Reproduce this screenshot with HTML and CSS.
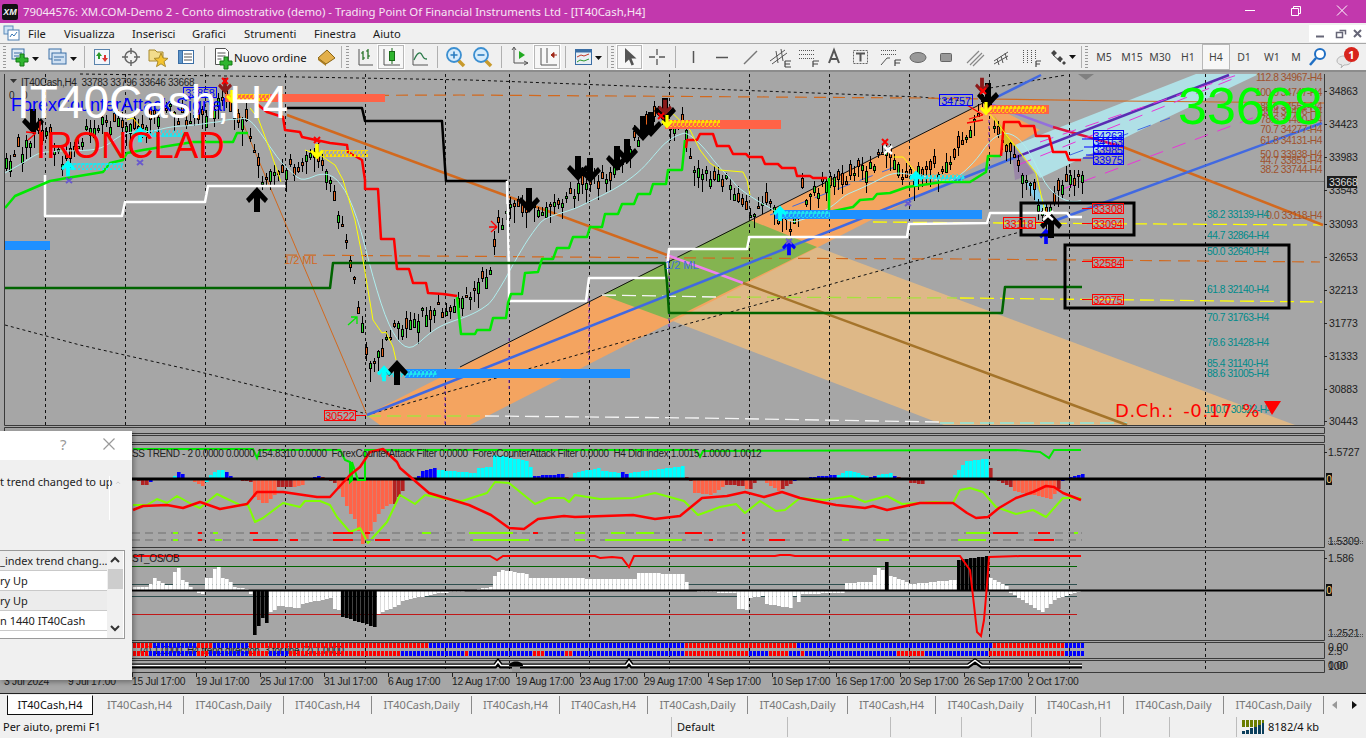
FILE: index.html
```html
<!DOCTYPE html>
<html lang="it">
<head>
<meta charset="utf-8">
<title>XM.COM MT4</title>
<link rel="stylesheet" href="styles.css">
</head>
<body>
<div class="app">
  <header class="titlebar">
    <span class="xm">XM</span>
    <span class="title-text">79044576: XM.COM-Demo 2 - Conto dimostrativo (demo) - Trading Point Of Financial Instruments Ltd - [IT40Cash,H4]</span>
    <div class="winbtns">
      <svg width="46" height="23" viewBox="0 0 46 23"><path d="M18 10.5h10" class="w1"/></svg>
      <svg width="46" height="23" viewBox="0 0 46 23"><path d="M18.500 8.500h7v7h-7zM20.500 8.500v-2h7v7h-2" class="w1"/></svg>
      <svg width="46" height="23" viewBox="0 0 46 23"><path d="M18 5.500l10 10M28 5.500l-10 10" class="w1"/></svg>
    </div>
  </header>

  <nav class="menubar">
    <svg class="mdi" width="20" height="18" viewBox="0 0 20 18"><rect x="2" y="2" width="9" height="8" fill="#cfe3f5" stroke="#5b89b8"/><rect x="6" y="6" width="11" height="10" fill="#fff" stroke="#4a7cb0"/><path d="M8 13l2-3 2 2 3-4" fill="none" stroke="#3a78b5"/></svg>
    <span class="mi mi-file">File</span>
    <span class="mi mi-vis">Visualizza</span>
    <span class="mi mi-ins">Inserisci</span>
    <span class="mi mi-gra">Grafici</span>
    <span class="mi mi-str">Strumenti</span>
    <span class="mi mi-fin">Finestra</span>
    <span class="mi">Aiuto</span>
    <div class="mdibtns">
      <svg width="23" height="17" viewBox="0 0 23 17"><rect width="23" height="17" fill="#fff"/><path d="M7 11.500h8" stroke="#667" stroke-width="2"/></svg>
      <svg width="18" height="17" viewBox="0 0 18 17"><rect width="18" height="17" fill="#fff"/><path d="M4.500 7.500h6v5h-6zM7.500 5.500h6v4" fill="none" stroke="#667" stroke-width="1.500"/></svg>
      <svg width="16" height="17" viewBox="0 0 16 17"><rect width="16" height="17" fill="#fff"/><path d="M4 5l7 7M11 5l-7 7" stroke="#667" stroke-width="2"/></svg>
    </div>
  </nav>

  <div class="toolbar">
    <i class="grip"></i>
    <svg width="34" height="26" viewBox="0 0 34 26"><rect x="4" y="5" width="12" height="10" fill="#dfeaf5" stroke="#3a6ea5"/><path d="M6 9h8M6 12h5" stroke="#3a6ea5"/><path d="M12 10h4v4h4v4h-4v4h-4v-4H8v-4h4z" fill="#2fb52f" stroke="#147a14"/><path d="M24 13h7l-3.500 4z" fill="#111"/></svg>
    <svg width="38" height="26" viewBox="0 0 38 26"><rect x="7" y="5" width="12" height="10" fill="#dfeaf5" stroke="#3a6ea5"/><rect x="10" y="9" width="14" height="11" fill="#cfe0f2" stroke="#3a6ea5"/><path d="M12 13h10M12 16h7" stroke="#3a6ea5"/><path d="M28 13h7l-3.500 4z" fill="#111"/></svg>
    <i class="sep"></i>
    <svg width="28" height="26" viewBox="0 0 28 26"><rect x="6.500" y="5.500" width="15" height="15" fill="#f2f6fb" stroke="#5a84ad"/><path d="M11 8l-3 4h2v3h2v-3h2z" fill="#2a9a2a"/><path d="M17 18l3-4h-2v-3h-2v3h-2z" fill="#d33"/></svg>
    <svg width="28" height="26" viewBox="0 0 28 26"><circle cx="15" cy="13" r="6" fill="none" stroke="#666" stroke-width="1.500"/><path d="M15 4v6M15 16v6M6 13h6M18 13h6" stroke="#666" stroke-width="1.500"/></svg>
    <svg width="28" height="26" viewBox="0 0 28 26"><path d="M5 6h6l2 2h6v9H5z" fill="#f3dc8c" stroke="#a98a2c"/><path d="M17 9l2 5 5 .4-4 3.200 1.500 5-4.500-2.800-4.500 2.800 1.500-5-4-3.200 5-.4z" fill="#f4c430" stroke="#a98a2c"/></svg>
    <svg width="28" height="26" viewBox="0 0 28 26"><rect x="6.500" y="6.500" width="15" height="13" fill="#fff" stroke="#3a6ea5"/><rect x="6.500" y="6.500" width="4" height="13" fill="#5b93c9" stroke="#3a6ea5"/><path d="M12 10h8M12 13h8M12 16h8" stroke="#555"/></svg>
    <i class="sep"></i>
    <svg width="26" height="26" viewBox="0 0 26 26"><path d="M7.500 4.500h10l3 3v13h-13z" fill="#fff" stroke="#555"/><path d="M9.500 9h8M9.500 12h8M9.500 15h4" stroke="#555"/><path d="M16 13h4v4h4v4h-4v4h-4v-4h-4v-4h4z" fill="#2fb52f" stroke="#147a14"/></svg>
    <span class="tb-text">Nuovo ordine</span>
    <svg width="26" height="26" viewBox="0 0 26 26"><path d="M5 14l9-8 8 8-9 6z" fill="#e3b04b" stroke="#8a6414"/><path d="M5 14l8 6v2l-8-6z" fill="#a87a1e"/></svg>
    <i class="sep tight"></i>
    <i class="grip"></i>
    <svg width="26" height="26" viewBox="0 0 26 26"><path d="M8 5v16h14" fill="none" stroke="#555"/><path d="M12 7v9M12 9h-2M12 14h2M17 5v10M17 7h-2M17 12h2" stroke="#186a18" stroke-width="1.200"/></svg>
    <svg class="pressed" width="28" height="26" viewBox="0 0 28 26"><path d="M7 5v16h16" fill="none" stroke="#555"/><path d="M15 4v16" stroke="#186a18"/><rect x="12.500" y="7.500" width="5" height="9" fill="#2fb52f" stroke="#186a18"/></svg>
    <svg width="28" height="26" viewBox="0 0 28 26"><path d="M8 5v16h15" fill="none" stroke="#555"/><path d="M9 16c3-7 6-9 8-5s3 4 5 4" fill="none" stroke="#2a7a4a" stroke-width="1.300"/></svg>
    <i class="sep"></i>
    <svg width="30" height="26" viewBox="0 0 30 26"><path d="M17 16l6 6" stroke="#c89a2c" stroke-width="3.500"/><circle cx="13" cy="11" r="7" fill="#d7ecfb" stroke="#3b8fd1" stroke-width="1.800"/><path d="M9.500 11h7M13 7.500v7" stroke="#2a7cc0" stroke-width="1.600"/></svg>
    <svg width="26" height="26" viewBox="0 0 26 26"><path d="M14 16l6 6" stroke="#c89a2c" stroke-width="3.500"/><circle cx="10" cy="11" r="7" fill="#d7ecfb" stroke="#3b8fd1" stroke-width="1.800"/><path d="M6.500 11h7" stroke="#2a7cc0" stroke-width="1.600"/></svg>
    <i class="sep"></i>
    <svg width="28" height="26" viewBox="0 0 28 26"><path d="M9 4v15h14M19 17l4 2-4 2M7 6l2-3 2 3" fill="none" stroke="#555"/><path d="M14 7l6 4-6 4z" fill="#22aa22"/></svg>
    <svg class="pressed" width="28" height="26" viewBox="0 0 28 26"><path d="M8 4v17h16M14 4v15" fill="none" stroke="#555"/><path d="M24 11h-6M18 11l3-2.500v5z" fill="#a02818" stroke="#a02818"/></svg>
    <i class="sep"></i>
    <svg width="36" height="26" viewBox="0 0 36 26"><rect x="6.500" y="5.500" width="16" height="15" fill="#e8eef5" stroke="#3a6ea5"/><rect x="6.500" y="5.500" width="16" height="3" fill="#3a6ea5"/><path d="M8 13l4-2 3 1 5-2" fill="none" stroke="#c0392b"/><path d="M8 18l3-2 4 1 5-2" fill="none" stroke="#2a9a2a"/><path d="M26 12h7l-3.500 4z" fill="#111"/></svg>
    <i class="sep tight"></i>
    <i class="grip short"></i>
    <svg class="pressed" width="27" height="26" viewBox="0 0 27 26"><path d="M9 4v15l4-3.500 2.500 6 2.500-1-2.500-6h5z" fill="#555"/></svg>
    <svg width="28" height="26" viewBox="0 0 28 26"><path d="M14 5v6M14 15v6M6 13h6M16 13h6" stroke="#555" stroke-width="1.300"/></svg>
    <i class="sep"></i>
    <svg width="28" height="26" viewBox="0 0 28 26"><path d="M14.500 7v12" stroke="#555" stroke-width="1.500"/></svg>
    <svg width="29" height="26" viewBox="0 0 29 26"><path d="M9 13.500h12" stroke="#555" stroke-width="1.500"/></svg>
    <svg width="28" height="26" viewBox="0 0 28 26"><path d="M8 20L21 7" stroke="#777" stroke-width="1.500"/></svg>
    <svg width="29" height="26" viewBox="0 0 29 26"><path d="M6 17L21 6M8 20l15-11M12 7l2 12M17 5l2 12" stroke="#555"/><path d="M21 17h6M21 20h5M21 23h6M21 17v6" stroke="#444" stroke-width="1.200"/></svg>
    <svg width="28" height="26" viewBox="0 0 28 26"><path d="M6 6.500h15M6 10.500h15M6 14.500h15" stroke="#555" stroke-dasharray="1 1"/><path d="M20 17h6M20 17v6M20 20h5" stroke="#444" stroke-width="1.200"/></svg>
    <svg width="26" height="26" viewBox="0 0 26 26"><path d="M8 19l5-13 5 13M10 15h6" fill="none" stroke="#555" stroke-width="2"/></svg>
    <svg width="28" height="26" viewBox="0 0 28 26"><rect x="6.500" y="6.500" width="14" height="13" fill="none" stroke="#666" stroke-dasharray="2 1"/><path d="M9 9.500h9M13.500 9.500v8" stroke="#555" stroke-width="2"/></svg>
    <svg width="29" height="26" viewBox="0 0 29 26"><path d="M6 6.500h15M6 10.500h15" stroke="#555" stroke-dasharray="1 1"/><path d="M6 21l6-7h3" fill="none" stroke="#555"/><path d="M20 16h6M20 16v6M20 19h5" stroke="#444" stroke-width="1.200"/></svg>
    <svg width="28" height="26" viewBox="0 0 28 26"><ellipse cx="14" cy="13.500" rx="8" ry="5" fill="#999" stroke="#666"/></svg>
    <svg width="28" height="26" viewBox="0 0 28 26"><rect x="8.500" y="9.500" width="11" height="8" rx="1" fill="#999" stroke="#666"/></svg>
    <svg width="28" height="26" viewBox="0 0 28 26"><path d="M7 19L19 7M10 21L22 9M13 22L24 11" stroke="#888" stroke-width="1.200"/></svg>
    <svg width="28" height="26" viewBox="0 0 28 26"><path d="M6 20l14-8M6 17l14-9M9 15l2 6M13 12l2 7M17 9l2 7" stroke="#555"/></svg>
    <svg width="28" height="26" viewBox="0 0 28 26"><path d="M7.500 6v14M11.500 6v14M15.500 6v14M19.500 6v10" stroke="#555" stroke-dasharray="1 1"/><path d="M20 17h5M20 17v6M20 20h4" stroke="#444" stroke-width="1.200"/></svg>
    <svg width="35" height="26" viewBox="0 0 35 26"><path d="M7 9l3-3 3 3-3 3zM13 15l3-3 3 3-3 3zM18 19l2-2 2 2-2 2z" fill="#444"/><path d="M9 11l8 7" stroke="#444"/><path d="M25 11h7l-3.500 4z" fill="#111"/></svg>
    <i class="sep tight"></i>
    <i class="grip short"></i>
    <span class="tf">M5</span><span class="tf">M15</span><span class="tf">M30</span><span class="tf">H1</span><span class="tf tf-on">H4</span><span class="tf">D1</span><span class="tf">W1</span><span class="tf tf-m">M</span>
    <svg width="24" height="26" viewBox="0 0 24 26"><circle cx="14" cy="10" r="5" fill="#fff" stroke="#1f6fc4" stroke-width="2"/><path d="M10 14l-6 7" stroke="#1f6fc4" stroke-width="2.500"/></svg>
    <div class="bubble">
      <svg width="36" height="26" viewBox="0 0 36 26"><path d="M7 17c0-3 3-5 7-5s7 2 7 5-3 4-7 4l-3 3 1-3c-3-.5-5-2-5-4z" fill="#e8e8e8" stroke="#b5b5b5"/></svg>
      <span class="badge">1</span>
    </div>
  </div>

  <main class="chartarea">
    <svg id="chart" class="chart" viewBox="0 70 1366 623" width="1366" height="623" xmlns="http://www.w3.org/2000/svg">
      <defs>
        <symbol id="dn" viewBox="-11 -14 22 26" overflow="visible"><path d="M-3-14H3V0L8-5l3 4L0 11-11-1l3-4L-3 0z"/></symbol>
        <pattern id="hy" width="4" height="7" patternUnits="userSpaceOnUse"><path d="M1 7L3 0H4.500L3 3.500H4M0 3h3" stroke="#ffe000" stroke-width="1.200" fill="none"/></pattern>
        <pattern id="hc" width="4" height="7" patternUnits="userSpaceOnUse"><path d="M1 7L3 0H4.500L3 3.500H4M0 3h3" stroke="#1fe6f0" stroke-width="1.200" fill="none"/></pattern>
      </defs>
      <rect class="bg" x="1" y="70" width="1365" height="623"/>
      <path class="topedge" d="M0 71H1366"/>

      <!-- bands -->
      <polygon class="b-tan" points="817,247 1295,425 944,425 670,320"/>
      <polygon class="b-or" points="366,415 985,102 1040,130 1008,150 470,425 380,425"/>
      <polygon class="b-gr" points="602,295 750,220 817,247 670,320"/>
      <polygon class="b-lb" points="1015,145 1196,74 1259,74 1040,178"/>
      <polygon class="b-sky" points="1026,182 1034,183 1052,215 1042,215"/>
      <polygon class="b-gold" points="994,115 1016,147 1005,147"/>
      <polygon class="b-pur" points="1011,143 1034,173 1015,180"/>

      <!-- grid -->
      <g id="grid" class="grid"></g>
      <path class="vp" d="M445 385V425M509 338V390M589 298V360M669 258V330M989 120V150"/>
      <path class="price-line" d="M5 181.500H1324"/>

      <!-- long lines -->
      <polyline class="bd" points="5,325 80,345 200,372 363,413"/>
      <polyline class="bd" points="80,74 300,77 470,80 920,97 965,101"/>
      <polyline class="bd" points="990,88 1066,75"/>
      <polyline class="bd" points="367,415 640,337 1020,232"/>
      <polyline class="bedge" points="460,367 985,102"/>
      <polyline class="od" points="225,96 460,95 920,98 988,99"/>
      <polyline class="ot" points="988,99 1120,101 1324,103"/>
      <polyline class="ot2" points="233,100 367,415"/>
      <polyline class="od" points="285,255 700,258 960,259 1320,262"/>
      <polyline class="yd" points="873,222 1000,223 1322,225"/>
      <polyline class="wd" points="602,295 717,297"/>
      <polyline class="lgd" points="727,297 957,298"/>
      <polyline class="yd" points="960,298 1322,302"/>
      <polyline class="lgd" points="367,416 480,416"/>
      <polyline class="wd" points="485,416 700,418 940,422"/>
      <polyline class="cd" points="940,423 1127,423"/>

      <polyline class="l-o" points="287,115 667,255"/>
      <polyline class="l-p" points="667,255 743,283"/>
      <polyline class="l-b" points="743,283 1127,425"/>
      <polyline class="l-v" points="990,104 1053,127"/>
      <polyline class="l-c" points="1053,127 1123,147"/>
      <polyline class="l-o" points="1123,147 1323,225"/>
      <polyline class="l-bl" points="367,415 1016,157"/>
      <polyline class="l-pu" points="1016,157 1229,75"/>
      <polyline class="l-bl" points="1043,225 1322,123"/>
      <polyline class="l-bl" points="985,103 1041,75"/>
      <polyline class="l-pk" points="1018,165 1240,76"/>
      <polyline class="l-pk" points="1040,142 1240,74"/>
      <polyline class="l-pk" points="1060,190 1290,104"/>
      <polyline class="l-bd" points="1070,155 1170,118"/>
      <polyline class="l-bd" points="770,215 900,165"/>

      <g id="candles"></g>
      <polyline id="cyline" class="l-cy"/>

      <!-- steps -->
      <polyline class="s-bk" points="287,108 362,108 365,121 442,121 445,167 446,181 507,181"/>
      <polyline class="s-wh" points="45,175 45,216 122,216 125,202 205,202 208,186 285,186"/>
      <polyline class="s-wh" points="507,181 509,272 509,301 586,301 589,278 666,278 669,249 747,249 749,239 749,237 907,237 909,224 987,223 990,213 1043,213 1067,213 1070,217 1082,217"/>
      <polyline class="s-dg" points="5,288 330,288 333,263 665,263 667,283 669,313 1002,313 1005,287 1082,287"/>
      <polyline class="s-re" points="252,100 267,112 283,117 285,130 300,132 302,137 330,143 347,145 348,152 362,160 365,180 365,189 378,189 381,239 394,239 397,269 409,269 413,283 426,283 428,293 443,294 457,296"/>
      <polyline class="s-li" points="5,208 15,196 50,181 67,178 103,172 110,163 123,160 127,153 143,150 193,142 233,142 237,133 248,133"/>
      <polyline class="s-li" points="457,297 461,334 475,334 477,330 490,330 493,318 506,318 508,303 511,294 522,294 525,273 538,272 542,259 553,259 557,248 569,248 573,237 587,237 590,227 602,227 605,214 618,214 622,204 634,204 638,194 650,194 653,184 666,184 668,170 682,170 685,140"/>
      <polyline class="s-re" points="686,148 687,140 697,140 700,134 713,134 717,146 729,146 733,154 746,154 749,157 762,157 765,164 778,164 782,168 795,168 797,176 810,176 813,178 827,178"/>
      <polyline class="s-li" points="829,178 829,212 853,207 860,200 873,199 877,194 890,193 907,187 922,185 942,182 970,182 986,172 988,156 1001,156"/>
      <polyline class="s-re" points="1001,156 1004,122 1019,122 1021,126 1034,126 1036,136 1049,136 1053,152 1066,152 1069,160 1081,160"/>
      <polyline class="l-ye" points="127,120 133,118 140,126"/>
      <polyline class="l-ye" points="250,108 258,118 270,150 281,182"/>
      <polyline class="l-ye" points="305,150 320,155 335,165 343,180 355,220 363,260 373,320 382,333 386,332 393,347 396,360"/>
      <polyline class="l-ye" points="664,105 690,130 700,150 710,163 720,170 743,172 747,180 750,195"/>
      <polyline class="l-ye" points="893,157 903,157 920,177"/>
      <polyline class="l-ye" points="989,113 1016,147 1036,173 1045,212"/>

      <!-- bars -->
      <rect class="bar-b" x="5" y="241" width="45" height="9"/>
      <rect class="bar-b" x="405" y="369" width="225" height="9"/>
      <rect class="bar-b" x="775" y="210" width="207" height="9"/>
      <rect class="bar-r" x="225" y="94" width="160" height="8"/>
      <rect class="bar-r" x="665" y="120" width="116" height="9"/>
      <rect class="bar-r" x="985" y="105" width="64" height="9"/>
      <rect fill="url(#hy)" x="228" y="94" width="42" height="7"/>
      <rect fill="url(#hy)" x="668" y="120" width="52" height="7"/>
      <rect fill="url(#hy)" x="988" y="106" width="58" height="7"/>
      <rect fill="url(#hy)" x="323" y="150" width="45" height="7"/>
      <rect fill="url(#hc)" x="68" y="163" width="55" height="7"/>
      <rect fill="url(#hc)" x="140" y="130" width="44" height="7"/>
      <rect fill="url(#hc)" x="380" y="370" width="57" height="7"/>
      <rect fill="url(#hc)" x="778" y="211" width="52" height="7"/>
      <rect fill="url(#hc)" x="910" y="174" width="55" height="7"/>

      <!-- arrows -->
      <g class="ar-b">
        <use href="#dn" transform="rotate(180 789 247)" x="782" y="238" width="14" height="18"/>
        <use href="#dn" transform="rotate(180 1046 236)" x="1039" y="228" width="14" height="16"/>
        <use href="#dn" transform="rotate(180 257 196)" x="250" y="188" width="14" height="16"/>
      </g>
      <g class="ar-k">
        <use href="#dn" x="22" y="109" width="22" height="26"/>
        <use href="#dn" x="518" y="188" width="22" height="26"/>
        <use href="#dn" x="567" y="156" width="22" height="26"/>
        <use href="#dn" x="579" y="158" width="22" height="26"/>
        <use href="#dn" x="606" y="146" width="22" height="26"/>
        <use href="#dn" x="616" y="139" width="22" height="26"/>
        <use href="#dn" x="632" y="116" width="22" height="26"/>
        <use href="#dn" x="640" y="112" width="22" height="26"/>
        <use href="#dn" x="654" y="98" width="22" height="26"/>
        <use href="#dn" x="977" y="83" width="22" height="26"/>
        <use href="#dn" transform="rotate(180 257 200)" x="246" y="188" width="22" height="26"/>
        <use href="#dn" transform="rotate(180 397 373)" x="386" y="361" width="22" height="26"/>
        <use href="#dn" transform="rotate(180 1051 226)" x="1040" y="214" width="22" height="26"/>
      </g>
      <g class="ar-dr">
        <use href="#dn" x="218" y="76" width="14" height="20"/>
        <use href="#dn" x="658" y="98" width="14" height="20"/>
        <use href="#dn" x="975" y="76" width="14" height="20"/>
      </g>
      <g class="ar-c">
        <use href="#dn" transform="rotate(180 68 168)" x="61" y="159" width="14" height="18"/>
        <use href="#dn" transform="rotate(180 140 134)" x="133" y="125" width="14" height="18"/>
        <use href="#dn" transform="rotate(180 384 373)" x="377" y="364" width="14" height="18"/>
        <use href="#dn" transform="rotate(180 780 213)" x="773" y="205" width="14" height="16"/>
        <use href="#dn" transform="rotate(180 916 178)" x="909" y="170" width="14" height="16"/>
      </g>
      <g class="ar-y">
        <use href="#dn" x="225" y="90" width="14" height="14"/>
        <use href="#dn" x="310" y="144" width="14" height="16"/>
        <use href="#dn" x="660" y="115" width="14" height="14"/>
        <use href="#dn" x="980" y="102" width="12" height="14"/>
      </g>
      <path class="x-r" d="M882 139l6 6M888 139l-6 6M222 78l6 6M228 78l-6 6M314 137l6 6M320 137l-6 6M658 113l6 6M664 113l-6 6M980 88l6 6M986 88l-6 6"/>
      <path class="x-p" d="M137 160l6 5M143 160l-6 5M66 178l6 5M72 178l-6 5M905 201l6 5M911 201l-6 5M786 239l6 5M792 239l-6 5"/>
      <path class="x-w" d="M884 146l8 8M892 146l-8 8M1043 211l10 9M1053 211l-10 9"/>
      <path class="a-g" d="M348 325l9-8M351 317h6v7"/>
      <path class="a-r" d="M497 227h-8M497 227l-6-6M497 227l-6 5M36 133l-10-1M36 133l-8 7M40 133v-12M983 115l-16-10M983 115l-14 4M983 120l-16 3"/>

      <!-- boxes and labels -->
      <rect class="box" x="1021" y="203" width="113" height="32"/>
      <rect class="box" x="1065" y="245" width="224" height="63"/>
      <path class="leader" d="M1082 208.500h10M1082 223.500h10M1082 261.500h10M1082 299.500h10M1036 222.500h8M356 415.500h10"/>
      <g class="lab-r">
        <rect x="1092.500" y="203.500" width="31" height="10"/><text x="1108" y="212.500">33308</text>
        <rect x="1092.500" y="218.500" width="31" height="10"/><text x="1108" y="227.500">33094</text>
        <rect x="1092.500" y="257.500" width="31" height="10"/><text x="1108" y="266.500">32584</text>
        <rect x="1092.500" y="294.500" width="31" height="10"/><text x="1108" y="303.500">32075</text>
        <rect x="1003.500" y="217.500" width="32" height="11"/><text x="1019" y="227.500">33118</text>
        <rect x="324.500" y="410.500" width="31" height="10"/><text x="340" y="419.500">30522</text>
      </g>
      <g class="lab-b">
        <rect x="939.500" y="94.500" width="33" height="11"/><text x="956" y="105">34757</text>
        <rect x="183.500" y="87.500" width="33" height="10"/><text x="200" y="97">33858</text>
        <rect x="1093.500" y="130.500" width="30" height="9"/><text x="1108" y="140">34263</text>
        <rect x="1093.500" y="137.500" width="30" height="9"/><text x="1108" y="146">34163</text>
        <rect x="1093.500" y="145.500" width="30" height="9"/><text x="1108" y="154">33985</text>
        <rect x="1093.500" y="153.500" width="30" height="11"/><text x="1108" y="164">33975</text>
      </g>
      <path class="lead-b" d="M1082 139h11M1084 147h9M1086 155h7M1083 158h10"/>

      <g class="fb">
        <text x="1322" y="81">112.8 34967-H4</text>
        <text x="1322" y="96">100.0 34747-H4</text>
        <text x="1322" y="110">88.6 34551-H4</text>
        <text x="1322" y="115">85.4 34496-H4</text>
        <text x="1322" y="123">78.6 34400-H4</text>
        <text x="1322" y="133">70.7 34277-H4</text>
        <text x="1322" y="144">61.8 34131-H4</text>
        <text x="1322" y="158">50.0 33938-H4</text>
        <text x="1322" y="164">44.7 33851-H4</text>
        <text x="1322" y="173">38.2 33744-H4</text>
        <text x="1322" y="219">0.0 33118-H4</text>
      </g>
      <g class="ft">
        <text x="1207" y="218">38.2 33139-H4</text>
        <text x="1207" y="239">44.7 32864-H4</text>
        <text x="1207" y="255">50.0 32640-H4</text>
        <text x="1207" y="293">61.8 32140-H4</text>
        <text x="1207" y="321">70.7 31763-H4</text>
        <text x="1207" y="346">78.6 31428-H4</text>
        <text x="1207" y="367">85.4 31140-H4</text>
        <text x="1207" y="377">88.6 31005-H4</text>
        <text x="1205" y="413">100.0 30522-H4</text>
      </g>
      <text class="ml-o" x="284" y="264">1/2 ML</text>
      <text class="ml-b" x="665" y="269">1/2 ML</text>

      <!-- corner texts -->
      <path class="caret" d="M10 79h7l-3.500 4z"/>
      <text class="hdr" x="21" y="86">IT40Cash,H4  33783 33796 33646 33668</text>
      <text class="hdr" x="9" y="99">0</text>
      <text class="hdr" x="22" y="99">0</text>
      <text class="t-blue" x="11" y="111">ForexCounterAttack Signal</text>
      <text class="t-iron" x="36" y="158">IRONCLAD</text>
      <text class="t-name" x="17" y="118">IT40Cash,H4</text>
      <text class="t-green" x="1178" y="124">33668</text>
      <text class="t-dch" x="1115" y="417">D.Ch.: -0.17 %</text>
      <polygon class="tri" points="1264,401 1281,401 1272,415"/>
      <path class="mark" d="M1078 74h16l-8 6z"/>

      <!-- panes -->
      <path class="frame" d="M4.500 74V425.500H1324.500V74M4.500 427.500H1324.500V433.500H4.500zM4.500 435.500H1324.500V442.500H4.500zM4.500 444.500H1324.500V547.500H4.500zM4.500 550.500H1324.500V640.500H4.500zM4.500 642.500H1324.500V658.500H4.500zM4.500 660.500H1324.500V672.500H4.500z"/>

      <!-- indicator 1 -->
      <g id="hist1"></g>
      <path class="zero1" d="M5 479H1324"/>
      <polyline class="i-lime" points="133,449 253,449 257,458 260,450 340,450 345,460 350,462 350,482 352,480 352,462 358,480 365,480 365,450 696,450 700,457 703,451 1016,450 1040,452 1049,458 1054,450 1081,450"/>
      <polyline class="i-yg" points="133,505 147,505 157,499 167,503 177,496 193,505 200,508 217,494 223,497 240,505 248,505 255,522 263,518 283,503 300,507 305,501 320,501 330,505 337,517 350,532 360,528 368,543 377,533 387,522 400,495 415,504 425,495 447,499 462,501 487,493 495,482 509,483 535,504 549,498 564,498 569,502 575,495 600,499 633,498 655,493 684,501 698,515 720,507 736,504 745,513 760,501 776,511 785,510 800,498 825,500 851,496 865,502 887,496 902,504 935,502 953,503 960,490 970,488 983,492 996,507 1016,514 1033,510 1046,517 1063,498 1081,498"/>
      <polyline class="i-red" points="133,510 143,506 167,505 183,508 200,502 220,509 247,504 257,492 283,492 317,497 330,497 350,475 360,467 370,452 383,449 397,462 400,468 429,493 469,505 491,515 509,528 524,529 538,519 564,516 575,517 633,515 655,519 680,516 702,498 727,496 745,492 764,497 782,492 800,498 836,505 865,508 873,506 887,510 920,503 953,503 967,513 976,518 988,517 999,508 1016,498 1033,492 1046,486 1054,487 1063,493 1081,500"/>
      <g id="dashrows"></g>
      <path class="zero-r" d="M1326 473h6v12h-6zM1326 584h6v12h-6z"/>
      <text class="zero-t" x="1329" y="483">0</text>
      <text class="zero-t" x="1329" y="594">0</text>
      <text class="hdr2" x="132" y="457">SS TREND - 2 0.0000 0.0000 154.8310 0.0000  ForexCounterAttack Filter 0.0000  ForexCounterAttack Filter 0.0000  H4 Didi index 1.0015 1.0000 1.0012</text>

      <!-- indicator 2 -->
      <path class="lv-g" d="M132 566.500H1077"/>
      <path class="lv-s" d="M132 584.500H1077M132 596.500H1077"/>
      <path class="lv-r" d="M132 614.500H1077"/>
      <g id="hist2"></g>
      <path class="zero2" d="M5 590.500H1324"/>
      <polyline class="i-red2" points="133,556 490,556 497,560 503,556 595,556 600,558 612,557 622,558 629,567 634,556 775,556 780,555 790,555 795,556 960,556 970,570 974,605 977,632 981,636 984,620 987,585 989,557 1020,556 1081,556"/>
      <text class="hdr2" x="132" y="562">ST_OS/OB</text>

      <!-- state rows -->
      <text class="hdr2" x="140" y="654">(4) 1.0000  H4 trend direction  3 for line (2) 1.0000</text>
      <g id="rows"></g>
      <path class="bl-k" d="M132 666H495L498 662L501 666H626L629 662L632 666H968L975 661L982 666H1082"/>
      <path class="bl-w" d="M132 665.500H495L498 661.500L501 665.500H626L629 661.500L632 665.500H968L975 660.500L982 665.500H1082"/>
      <path class="blob" d="M509 666c0-6 14-6 14 0z"/>
      <rect class="blob2" x="512" y="667" width="8" height="5"/>

      <!-- right axis labels -->
      <g class="ax">
        <text x="1329" y="95">34863</text><text x="1329" y="128">34423</text><text x="1329" y="161">33983</text><text x="1329" y="194">33543</text><text x="1329" y="228">33093</text><text x="1329" y="261">32653</text><text x="1329" y="294">32213</text><text x="1329" y="327">31773</text><text x="1329" y="360">31333</text><text x="1329" y="393">30883</text><text x="1329" y="425">30443</text>
        <text x="1328" y="456">1.5727</text><text x="1328" y="545">1.5309</text><text x="1328" y="562">1.586</text><text x="1328" y="637">1.2521</text>
        <text x="1328" y="651">0.00</text><text x="1328" y="655">2.5</text><text x="1328" y="669">0.00</text><text x="1328" y="670">100</text>
      </g>
      <path class="ticks" d="M1324 91.500h3M1324 124.500h3M1324 157.500h3M1324 190.500h3M1324 224.500h3M1324 257.500h3M1324 290.500h3M1324 323.500h3M1324 356.500h3M1324 389.500h3M1324 421.500h3M1324 452.500h3M1324 558.500h3"/>
      <path class="squig" d="M1328 541.500h36M1328 543.500h36M1328 634.500h36M1328 636.500h36"/>
      <rect class="pr-bg" x="1327" y="176" width="30" height="12"/>
      <text class="pr-t" x="1329" y="186">33668</text>

      <!-- time axis -->
      <g class="tx">
        <text x="4" y="685">3 Jul 2024</text><text x="68" y="685">9 Jul 17:00</text><text x="132" y="685">15 Jul 17:00</text><text x="196" y="685">19 Jul 17:00</text><text x="260" y="685">25 Jul 17:00</text><text x="324" y="685">31 Jul 17:00</text><text x="388" y="685">6 Aug 17:00</text><text x="452" y="685">12 Aug 17:00</text><text x="516" y="685">19 Aug 17:00</text><text x="580" y="685">23 Aug 17:00</text><text x="644" y="685">29 Aug 17:00</text><text x="708" y="685">4 Sep 17:00</text><text x="772" y="685">10 Sep 17:00</text><text x="836" y="685">16 Sep 17:00</text><text x="900" y="685">20 Sep 17:00</text><text x="964" y="685">26 Sep 17:00</text><text x="1028" y="685">2 Oct 17:00</text>
      </g>
      <path class="ticks" d="M4.500 673v4M68.500 673v4M132.500 673v4M196.500 673v4M260.500 673v4M324.500 673v4M388.500 673v4M452.500 673v4M516.500 673v4M580.500 673v4M644.500 673v4M708.500 673v4M772.500 673v4M836.500 673v4M900.500 673v4M964.500 673v4M1028.500 673v4"/>
    </svg>

    <aside class="dialog">
      <div class="d-title"><span class="d-q">?</span><svg class="d-x" width="14" height="14" viewBox="0 0 14 14"><path d="M1.500 1.500l11 11M12.500 1.500l-11 11" stroke="#9a9a9a" stroke-width="1.200"/></svg></div>
      <div class="d-msg">
        <span class="d-text">t trend changed to up</span>
        <div class="d-scroll">
          <svg width="12" height="8" viewBox="0 0 12 8"><path d="M2 6l4-4 4 4" fill="none" stroke="#c2c2c2" stroke-width="2"/></svg>
          <svg width="12" height="8" viewBox="0 0 12 8"><path d="M2 2l4 4 4-4" fill="none" stroke="#c2c2c2" stroke-width="2"/></svg>
        </div>
      </div>
      <div class="d-list">
        <div class="d-rows">
          <div class="d-row alt">_index trend chang...</div>
          <div class="d-row">ry Up</div>
          <div class="d-row alt">ry Up</div>
          <div class="d-row">n 1440 IT40Cash</div>
        </div>
        <div class="d-bar">
          <svg width="12" height="18" viewBox="0 0 12 18"><path d="M2 11l4-4 4 4" fill="none" stroke="#333" stroke-width="2"/></svg>
          <i class="thumb"></i>
          <svg class="chev-low" width="12" height="18" viewBox="0 0 12 18"><path d="M2 7l4 4 4-4" fill="none" stroke="#333" stroke-width="2"/></svg>
        </div>
      </div>
    </aside>
  </main>

  <div class="tabs">
    <span class="tab tab-on">IT40Cash,H4</span>
    <span class="tab">IT40Cash,H4</span>
    <span class="tab d">IT40Cash,Daily</span>
    <span class="tab">IT40Cash,H4</span>
    <span class="tab d">IT40Cash,Daily</span>
    <span class="tab">IT40Cash,H4</span>
    <span class="tab">IT40Cash,H4</span>
    <span class="tab d">IT40Cash,Daily</span>
    <span class="tab d">IT40Cash,Daily</span>
    <span class="tab">IT40Cash,H4</span>
    <span class="tab d">IT40Cash,Daily</span>
    <span class="tab">IT40Cash,H1</span>
    <span class="tab d">IT40Cash,Daily</span>
    <span class="tab d">IT40Cash,Daily</span>
    <span class="tabnav"><i class="tl"></i><i class="tr"></i></span>
  </div>

  <footer class="status">
    <span class="st st-a">Per aiuto, premi F1</span>
    <span class="st st-b">Default</span>
    <span class="st st-c"></span>
    <span class="st st-d"></span>
    <span class="st st-e"></span>
    <span class="st st-f"></span>
    <span class="st st-g"></span>
    <span class="st st-h"></span>
    <span class="st st-i">
      <svg width="24" height="16" viewBox="0 0 24 16"><path d="M1 1v7h3V1zM5 1v7h3V1zM9 1v7h3V1zM13 1v7h3V1zM17 1v7h3V1zM21 1v7h2V1z" fill="#6b7d00"/><path d="M1 12v3h3v-3zM5 11v4h3v-4zM9 9v6h3V9zM13 8v7h3V8zM17 6v9h3V6zM21 4v11h2V4z" fill="#0c3f5c"/></svg>
      <span>8182/4 kb</span>
    </span>
  </footer>
</div>
<script src="chart.js"></script>
</body>
</html>
```
FILE: styles.css
```css
*{box-sizing:border-box}
html,body{margin:0;padding:0;height:738px;overflow:hidden;background:#f0f0f0}
body{font-family:"Noto Sans","Open Sans",sans-serif;color:#111}
.app{display:flex;flex-direction:column;width:1366px;height:738px}

.titlebar{height:23px;background:#c238ad;display:flex;align-items:center;color:#f7e6f4;font-size:11.400px;flex:none}
.xm{width:16px;height:16px;margin:0 5px 0 2px;background:#111;color:#f3f3f3;font:italic 700 9px/16px "Liberation Sans",sans-serif;text-align:center;border-radius:2px}
.title-text{white-space:nowrap}
.winbtns{margin-left:auto;display:flex;margin-right:1px}
.w1{fill:none;stroke:#fff;stroke-width:1}

.menubar{height:21px;display:flex;align-items:center;font-size:11.200px;background:#f0f0f0;border-bottom:1px solid #a8a8a8;flex:none;padding-left:2px}
.mdi{margin-right:6px}
.mi{color:#1a1a1a;white-space:nowrap}
.mi-file{width:36px}.mi-vis{width:68px}.mi-ins{width:60px}.mi-gra{width:52px}.mi-str{width:70px}.mi-fin{width:59px}
.mdibtns{margin-left:auto;display:flex;align-items:center;gap:0;height:19px}

.toolbar{height:26px;display:flex;align-items:center;background:#f0f0f0;flex:none}
.toolbar svg{flex:none;display:block}
.grip{width:8px;height:22px;flex:none;background:repeating-linear-gradient(#9a9a9a 0 1px,transparent 1px 3px) 3px 0/3px 100% no-repeat}
.grip.short{width:7px;background-position:2px 0}
.sep{width:8px;height:22px;flex:none;background:linear-gradient(#b0b0b0,#b0b0b0) 4px 0/1px 100% no-repeat}
.sep.tight{width:4px;background-position:2px 0}
.pressed{background:#f7f7f7;outline:1px solid #b8b8b8;outline-offset:-2px;box-shadow:inset 0 0 0 2px #fff}
.tb-text{width:80px;font-size:11.400px;white-space:nowrap;color:#111}
.tf{width:28px;height:26px;font-size:10.500px;line-height:26px;text-align:center;color:#444;flex:none}
.tf-on{background:#f7f7f7;box-shadow:inset 0 0 0 1px #b8b8b8}
.tf-m{width:20px}
.bubble{position:relative;width:36px;height:26px;flex:none}
.badge{position:absolute;top:3px;left:14px;width:15px;height:15px;border-radius:50%;background:#d8241c;color:#fff;font:700 11px/15px "Noto Sans",sans-serif;text-align:center}

.chartarea{flex:1;position:relative;height:623px;overflow:hidden;background:#a6a6a6}
.chart{display:block}
.chart text{font-family:"Liberation Sans",sans-serif}
.bg{fill:#a6a6a6}
.topedge{stroke:#8c8c8c;stroke-width:2}
.b-tan{fill:#deb887}.b-or{fill:#f4a460}.b-gr{fill:#84b450}.b-lb{fill:#b0e0e6}.b-sky{fill:#87ceeb}.b-gold{fill:#d4b82a}.b-pur{fill:#9a87a8}
.grid line,.grid path{stroke:#111;stroke-dasharray:3 3;stroke-width:1;fill:none}
.vp{stroke:#7a2fc0;stroke-dasharray:3 3;fill:none}
.price-line{stroke:#7a7a7a;fill:none}
polyline{fill:none}
.bd{stroke:#111;stroke-dasharray:3 3}
.bedge{stroke:#111;stroke-width:1}
.od{stroke:#d2691e;stroke-dasharray:12 7;stroke-width:1.200}
.ot{stroke:#d2691e;stroke-width:1.200}
.ot2{stroke:#d2691e;stroke-width:1}
.yd{stroke:#ffff00;stroke-dasharray:14 6;stroke-width:1.300}
.wd{stroke:#f4f4f4;stroke-dasharray:14 6;stroke-width:1.300}
.lgd{stroke:#a8e040;stroke-dasharray:14 6;stroke-width:1.300}
.cd{stroke:#8fe8e0;stroke-dasharray:14 6;stroke-width:1.300}
.l-o{stroke:#d2691e;stroke-width:2.500}
.l-p{stroke:#ee82ee;stroke-width:2.500}
.l-b{stroke:#a5742a;stroke-width:2.500}
.l-v{stroke:#9370db;stroke-width:2.500}
.l-c{stroke:#dc143c;stroke-width:2.500}
.l-bl{stroke:#4169e1;stroke-width:2.500}
.l-pu{stroke:#5a2db3;stroke-width:2.500}
.l-pk{stroke:#e935d8;stroke-width:1;stroke-dasharray:14 10}
.l-bd{stroke:#4169e1;stroke-width:1;stroke-dasharray:14 10}
.l-cy{stroke:#afeeee;stroke-width:1}
.l-ye{stroke:#ffff00;stroke-width:1}
.s-bk,.s-wh,.s-dg,.s-re,.s-li{stroke-width:2.500;stroke-linejoin:round}
.s-bk{stroke:#000}.s-wh{stroke:#fff}.s-dg{stroke:#006400}.s-re{stroke:#ff0000}.s-li{stroke:#00e800}
.bar-b{fill:#1e90ff}.bar-r{fill:#ff6347}
.ar-k{fill:#000}.ar-dr{fill:#8b1a1a}.ar-b{fill:#0000ff}.ar-c{fill:#00ffff}.ar-y{fill:#ffff00}
.x-r{stroke:#ff0000;stroke-width:2;fill:none}
.x-p{stroke:#6a5acd;stroke-width:2;fill:none}
.x-w{stroke:#fff;stroke-width:2.500;fill:none}
.a-g{stroke:#00e800;stroke-width:1.300;fill:none}
.a-r{stroke:#ff0000;stroke-width:1.300;fill:none}
.box{fill:none;stroke:#000;stroke-width:3}
.leader{stroke:#ff0000;fill:none}
.lead-b{stroke:#0000ff;fill:none}
.lab-r rect{fill:none;stroke:#ff0000}
.lab-b rect{fill:none;stroke:#0000ff}
.chart .lab-r text{fill:#ff0000;font-size:11px;text-anchor:middle;letter-spacing:-.2px}
.chart .lab-b text{fill:#0000ff;font-size:11px;text-anchor:middle;letter-spacing:-.2px}
.chart .fb text{fill:#a0522d;font-size:10.300px;text-anchor:end;letter-spacing:-.5px}
.chart .ft text{fill:#008b8b;font-size:10.300px;letter-spacing:-.5px}
.chart .ml-o{fill:#d2691e;font-size:11px}
.chart .ml-b{fill:#4169e1;font-size:11px}
.caret{fill:#333}
.chart .hdr{fill:#222;font-size:10px;letter-spacing:-.3px;white-space:pre}
.chart .hdr2{fill:#222;font-size:10px;letter-spacing:-.35px;white-space:pre}
.chart .t-blue{fill:#0000ff;font-size:18px}
.chart .t-iron{fill:#ff0000;font-size:36.500px}
.chart .t-name{fill:#fff;font-size:46px}
.chart .t-green{fill:#00ff00;font-size:52px}
.chart .t-dch{fill:#ff0000;font-family:"DejaVu Sans",sans-serif;font-size:18px;letter-spacing:.6px;word-spacing:3px}
.tri{fill:#ff0000}
.mark{fill:#808080}
.frame{fill:none;stroke:#3a3a3a}
.zero1{stroke:#000;stroke-width:3}
.zero2{stroke:#000;stroke-width:2}
.i-lime{stroke:#00e800;stroke-width:2}
.i-yg{stroke:#7fff00;stroke-width:2;stroke-linejoin:round}
.i-red{stroke:#ff0000;stroke-width:2.500;stroke-linejoin:round}
.i-red2{stroke:#ff0000;stroke-width:2}
.zero-r{fill:#111}
.chart .zero-t{fill:#ffd27f;font-size:10px;text-anchor:middle}
.lv-g{stroke:#006400;fill:none}
.lv-s{stroke:#2f4f4f;fill:none}
.lv-r{stroke:#c01818;fill:none}
.bl-k{stroke:#000;stroke-width:5;fill:none}
.bl-w{stroke:#fff;stroke-width:1.500;fill:none}
.blob{fill:#000}
.blob2{fill:#999}
.chart .ax text{fill:#1c1c1c;font-size:10.500px;letter-spacing:-.1px}
.ticks{stroke:#222;fill:none}
.squig{stroke:#555;stroke-dasharray:1 1;fill:none}
.pr-bg{fill:#1d1d1d}
.chart .pr-t{fill:#ddd;font-size:10.500px;letter-spacing:-.1px}
.chart .tx text{fill:#1c1c1c;font-size:10.300px;letter-spacing:-.25px}
.da-g{stroke:#8a8a8a;stroke-width:2;stroke-dasharray:8 5;fill:none}

.dialog{position:absolute;left:0;top:361px;width:132px;height:249px;background:#f0f0f0;box-shadow:2px 2px 5px rgba(0,0,0,.35);font-size:11px;color:#222}
.d-title{height:29px;background:#fff;position:relative}
.d-q{position:absolute;left:60px;top:3px;font-size:15px;color:#999}
.d-x{position:absolute;left:102px;top:6px}
.d-msg{height:60px;white-space:nowrap;overflow:hidden;position:relative}
.d-text{position:absolute;left:0;top:14px}
.d-scroll{position:absolute;left:109px;top:16px;width:17px;height:50px;border-left:1px solid #fff;display:flex;flex-direction:column;gap:38px;align-items:center;padding-top:5px}
.d-list{height:89px;width:125px;margin-top:30px;border:1px solid #9a9a9a;border-left:0;display:flex;background:#fff}
.d-rows{width:107px;overflow:hidden}
.d-row{height:20px;line-height:19px;border-bottom:1px solid #c9c9c9;white-space:nowrap;background:#fff;overflow:hidden}
.d-row.alt{background:#ececec}
.d-bar{width:16px;background:#f0f0f0;display:flex;flex-direction:column;align-items:center;position:relative}
.chev-low{position:absolute;bottom:1px}
.thumb{width:15px;height:20px;background:#cdcdcd;display:block}

.tabs{height:23px;flex:none;background:#f0f0f0;border-top:1px solid #222;display:flex;align-items:flex-start;font-size:11px;color:#777;padding-left:7px}
.tab{width:88px;height:18px;margin-top:2px;line-height:18px;text-align:center;border-right:1px solid #8a8a8a;flex:none;white-space:nowrap}
.tab.d{width:100px}
.tab-on{width:86px;height:20px;margin-top:1px;background:#fff;color:#111;border:1px solid #111;border-top-color:#fff;margin-right:3px;line-height:18px}
.tabnav{display:flex;align-items:center;gap:15px;margin-left:8px;height:18px;margin-top:2px}
.tl{width:0;height:0;border:4px solid transparent;border-right:5px solid #999;border-left:0}
.tr{width:0;height:0;border:4px solid transparent;border-left:5px solid #111;border-right:0}

.status{height:22px;flex:none;display:flex;align-items:center;font-size:11px;background:#f0f0f0;color:#111}
.st{height:20px;line-height:20px;border-right:1px solid #bcbcbc;flex:none;white-space:nowrap;padding-left:5px}
.st-a{width:672px;padding-left:3px}.st-b{width:116px}.st-c{width:103px}.st-d{width:71px}.st-e{width:70px}.st-f{width:69px}.st-g{width:69px}.st-h{width:67px}
.st-i{border:0;display:flex;align-items:center;gap:3px;padding-left:4px;width:129px}
```
FILE: chart.js
```js
(function () {
  var NS = 'http://www.w3.org/2000/svg';
  function el(parent, tag, attrs) {
    var n = document.createElementNS(NS, tag);
    for (var k in attrs) n.setAttribute(k, attrs[k]);
    parent.appendChild(n);
    return n;
  }
  function $(id) { return document.getElementById(id); }

  /* dotted grid */
  var gridX = [45, 125, 205, 285, 365, 445, 509, 589, 669, 749, 829, 909, 989, 1069, 1205];
  var grid = $('grid');
  gridX.forEach(function (x) {
    el(grid, 'path', { d: 'M' + (x + .5) + ' 74V425M' + (x + .5) + ' 444V547M' + (x + .5) + ' 550V640M' + (x + .5) + ' 642V672' });
  });

  /* price path */
  var P = [[5,165],[20,148],[35,128],[50,140],[60,160],[70,150],[85,128],[100,125],[120,120],[140,128],[165,108],[190,125],[210,105],[225,100],[235,120],[245,118],[255,170],[265,180],[285,170],[300,165],[315,155],[330,185],[345,245],[355,295],[365,350],[372,360],[385,345],[395,330],[410,320],[425,312],[440,310],[460,305],[478,285],[490,270],[495,232],[510,210],[525,205],[545,208],[570,190],[585,180],[600,182],[620,160],[640,135],[660,112],[672,125],[685,130],[690,170],[710,180],[730,180],[745,210],[770,210],[790,225],[800,195],[820,188],[850,175],[885,155],[905,180],[925,170],[950,170],[960,140],[975,115],[985,95],[990,110],[1000,145],[1015,160],[1030,190],[1045,215],[1055,195],[1070,178],[1083,178]];
  function at(x) {
    for (var i = 1; i < P.length; i++) {
      if (x <= P[i][0]) {
        var a = P[i - 1], b = P[i];
        return a[1] + (b[1] - a[1]) * (x - a[0]) / (b[0] - a[0]);
      }
    }
    return P[P.length - 1][1];
  }
  var seed = 41;
  function rnd() { seed = (seed * 16807) % 2147483647; return (seed % 1000) / 1000; }

  var g = $('candles'), xs = [], ys = [];
  for (var x = 5; x <= 1081; x += 4) {
    var base = at(x);
    var c = base + (rnd() - .5) * 16, o = c + (rnd() - .5) * 22;
    xs.push(x); ys.push(base);
    var top = Math.min(o, c), bot = Math.max(o, c);
    if (bot - top < 2) bot = top + 2;
    el(g, 'rect', { x: x + 1, y: Math.round(top - 1 - rnd() * 8), width: 1, height: Math.round(bot - top + 2 + rnd() * 18), fill: '#000' });
    el(g, 'rect', { x: x, y: Math.round(top), width: 3, height: Math.round(bot - top) + 1, fill: '#000' });
    el(g, 'rect', { x: x + 1, y: Math.round(top) + 1, width: 1, height: Math.max(1, Math.round(bot - top) - 1), fill: c < o ? '#22e022' : '#e8641c' });
  }

  /* lagging moving average */
  var pts = [];
  for (var i = 0; i < ys.length; i++) {
    var s = 0, n = 0;
    for (var j = Math.max(0, i - 12); j <= i; j++) { s += ys[j]; n++; }
    pts.push(xs[i] + ',' + (s / n + 8).toFixed(1));
  }
  $('cyline').setAttribute('points', pts.join(' '));

  /* histograms */
  var COL = { C: '#00ffff', B: '#0000ff', T: '#ff6347', D: '#b22222', W: '#ffffff', K: '#000000' };
  function snap(x) { return 5 + Math.round((x - 5) / 4) * 4; }
  function hist(target, zero, data, barW) {
    var g = $(target);
    data.forEach(function (d) {
      var a = snap(d[0]), b = snap(d[1]);
      for (var x = a; x < b; x += 4) {
        var t = b - 4 > a ? (x - a) / (b - 4 - a) : 0;
        var h = Math.round(d[3] + (d[4] - d[3]) * t);
        if (h === 0) h = d[3] > 0 ? 1 : -1;
        el(g, 'rect', { x: x, y: h > 0 ? zero - h : zero, width: barW, height: Math.abs(h), fill: COL[d[2]] });
      }
    });
  }
  hist('hist1', 479, [
    [132,140,'D',-1,-2],[140,148,'D',-6,-6],[148,152,'B',-3,-3],[173,178,'C',3,5],[178,186,'B',7,5],[192,203,'T',-3,-7],[203,207,'C',-3,-3],[207,220,'C',4,9],[220,226,'C',9,8],[226,234,'B',7,3],
    [236,252,'D',-1,-3],[252,264,'T',-18,-24],[264,277,'T',-24,-16],[277,292,'D',-8,-8],[292,303,'T',-8,-6],[312,322,'B',2,3],[322,328,'D',2,1],[330,338,'D',-2,-4],[338,352,'T',-10,-35],[352,366,'T',-40,-65],[366,382,'T',-60,-35],[382,392,'T',-30,-25],[392,404,'D',-25,-12],
    [416,420,'B',3,3],[420,436,'B',8,11],[436,476,'C',9,6],[476,491,'C',11,12],[491,527,'C',24,18],[527,532,'C',12,8],[532,563,'B',3,5],[563,572,'D',2,1],[572,600,'C',6,11],[600,620,'C',8,6],[620,630,'B',7,5],[630,685,'C',6,13],[685,689,'D',2,2],
    [690,694,'D',-2,-2],[694,712,'T',-14,-16],[712,724,'T',-14,-8],[724,745,'D',-6,-7],[745,750,'T',-10,-10],[750,756,'D',-10,-4],[766,782,'T',-4,-12],[782,792,'D',-10,-5],[792,796,'B',-2,-2],[796,800,'B',1,1],[807,836,'B',2,4],[836,850,'C',4,8],[850,868,'C',8,3],[868,878,'B',2,3],[878,892,'C',4,6],[892,896,'B',3,3],[896,900,'D',2,2],[908,924,'D',-4,-5],[954,966,'C',4,14],[966,988,'C',18,20],[988,992,'D',11,11],[992,996,'D',1,1],[996,1012,'D',-2,-8],[1012,1052,'T',-12,-20],[1052,1056,'T',-15,-15],[1056,1060,'D',-10,-10],[1060,1064,'B',-2,-2],[1064,1084,'B',1,5]
  ], 3.6);
  hist('hist2', 590, [
    [132,148,'W',3,3],[148,156,'W',6,12],[156,164,'W',9,7],[164,172,'W',5,5],[172,180,'W',18,22],[180,188,'W',10,8],[188,194,'W',3,3],[196,204,'W',-3,-4],[204,212,'W',12,12],[212,220,'W',21,23],[220,224,'W',12,12],[224,234,'W',11,8],[234,248,'W',3,1],[248,252,'W',-4,-5],[252,256,'K',-45,-45],[256,260,'K',-36,-36],[260,264,'K',-28,-28],[264,268,'K',-33,-33],[268,276,'W',-22,-20],[276,300,'W',-16,-18],[300,332,'W',-14,-8],[332,340,'W',-19,-20],[340,376,'K',-27,-37],[376,400,'W',-24,-15],[400,436,'W',-11,-4],[436,476,'W',-3,-1],[476,491,'W',1,3],[491,500,'W',14,18],[500,527,'W',20,16],[527,636,'W',12,11],[636,684,'W',17,16],[684,690,'W',8,3],[695,738,'W',-2,-3],[738,748,'W',-19,-20],[748,764,'W',-8,-6],[764,794,'W',-14,-18],[794,800,'W',-6,-12],[800,844,'W',-4,-3],[844,870,'W',7,8],[870,880,'W',8,22],[880,884,'W',20,20],[884,888,'K',28,28],[888,910,'W',14,8],[910,955,'W',6,10],[956,988,'K',30,34],[988,1008,'W',12,4],[1008,1040,'W',-3,-20],[1040,1056,'W',-22,-10],[1056,1080,'W',-8,-2]
  ], 3.6);

  /* dashed state rows in first indicator */
  var d = $('dashrows');
  function row(y, lime, red) {
    el(d, 'path', { 'class': 'da-g', d: 'M132 ' + y + 'H1082' });
    [[lime, '#7fff00'], [red, '#ff0000']].forEach(function (p) {
      p[0].forEach(function (r) {
        el(d, 'rect', { x: r[0], y: y - 1, width: r[1] - r[0], height: 2, fill: p[1] });
      });
    });
  }
  row(533, [[173,178],[213,218],[422,431],[469,513],[575,585],[611,625],[636,654],[966,990],[1074,1078]],
           [[198,202],[250,258],[333,353],[365,370],[533,538],[685,702],[742,745],[993,1018],[1038,1050]]);
  row(540, [[173,178],[215,222],[473,529],[575,585],[605,682],[842,849],[876,889],[958,986]],
           [[198,202],[253,278],[290,298],[333,353],[375,390],[709,713],[742,745],[769,785],[1034,1054]]);

  /* red and blue state rows */
  var r = $('rows');
  function squares(y, h, ranges) {
    ranges.forEach(function (q) {
      for (var x = snap(q[0]); x < q[1]; x += 4) {
        el(r, 'rect', { x: x, y: y, width: 3, height: h, fill: q[2] });
      }
    });
  }
  var RE = '#ff0000', BL = '#0000ff';
  squares(643, 5, [[132,152,RE],[152,195,BL],[195,212,RE],[212,247,BL],[247,427,RE],[427,683,BL],[683,795,RE],[795,991,BL],[991,1063,RE],[1063,1084,BL]]);
  squares(651, 5, [[132,147,RE],[147,198,BL],[198,210,RE],[210,250,BL],[250,270,RE],[270,287,BL],[287,400,RE],[400,464,BL],[464,468,RE],[468,532,BL],[532,544,RE],[544,564,BL],[564,571,RE],[571,683,BL],[683,750,RE],[750,768,BL],[768,787,RE],[787,800,BL],[800,804,RE],[804,896,BL],[896,923,RE],[923,988,BL],[988,1063,RE],[1063,1084,BL]]);
})();
```
